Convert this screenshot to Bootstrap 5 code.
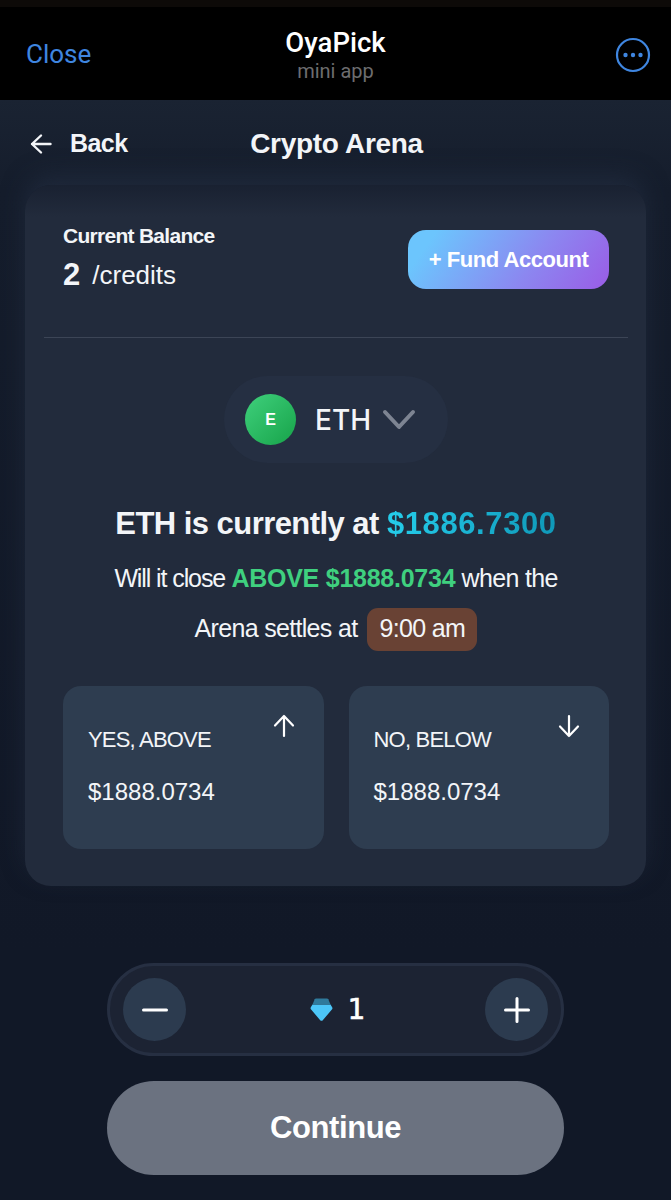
<!DOCTYPE html>
<html lang="en">
<head>
  <meta charset="UTF-8">
  <meta name="viewport" content="width=device-width, initial-scale=1.0">
  <title>OyaPick</title>
  <link href="https://cdn.jsdelivr.net/npm/bootstrap@5.3.0/dist/css/bootstrap.min.css" rel="stylesheet">
  <style>
  body {
    background: #111827;
    color: #f3f5f8;
    font-family: "Liberation Sans", Arial, sans-serif;
    width: 671px;
    height: 1200px;
    overflow: hidden;
  }
  .app-bar {
    height: 100px;
    background: #000;
    padding: 3px 20px 0 26px;
    border-top: 7px solid #0d0a08;
  }
  .app-side-l { width: 84px; }
  .app-side-r { width: 90px; }
  .app-close { font-size: 26px; color: #3f86e0; font-family: Roboto, sans-serif; margin-top: -2px; }
  .app-name { font-size: 27.5px; line-height: 30px; font-weight: 500; color: #fff; font-family: Roboto, sans-serif; margin-top: 1px; }
  .app-sub { font-size: 20px; line-height: 26px; color: #6d6d6f; font-family: Roboto, sans-serif; }
  .page-main {
    height: 1100px;
    background: linear-gradient(#1a2332 0, #151d2c 90px, #111827 850px);
    padding: 0 25px;
  }
  .sub-head { height: 85px; padding: 3px 0 0 2px; }
  .back-link { position: absolute; left: 5px; top: 3px; bottom: 0; font-size: 25px; font-weight: 700; letter-spacing: -.55px; gap: 18px; }
  .sub-title { font-size: 28px; font-weight: 700; letter-spacing: -.3px; margin: 0; line-height: 1; }
  .arena-card {
    height: 701px;
    background: linear-gradient(#192131 0, #222b3c 32px);
    border-radius: 26px;
    box-shadow: 0 -10px 24px -2px rgba(42, 54, 76, .5);
    padding: 0 37px 0 38px;
  }
  .balance-row { height: 152px; }
  .balance-info { padding-top: 39px; }
  .balance-label { font-size: 21px; font-weight: 700; letter-spacing: -.72px; line-height: 24px; }
  .balance-val { font-size: 26px; line-height: 34px; margin-top: 10px; gap: 12px; }
  .balance-val b { font-size: 31px; }
  .fund-btn {
    width: 201px;
    height: 59px;
    margin-top: 45px;
    border: 0;
    border-radius: 18px;
    color: #fff;
    font-size: 22px;
    font-weight: 700;
    letter-spacing: -.45px;
    background: linear-gradient(125deg, #6cc5fd 12%, #8c86f0 62%, #9a5ce6 100%);
  }
  .card-line { margin: 0 -19px; border: 0; border-top: 1px solid #3c4556; opacity: 1; }
  .coin-pill {
    width: 224px;
    height: 87px;
    margin: 38px auto 0;
    padding-left: 21px;
    background: #252f42;
    border-radius: 44px;
  }
  .coin-dot {
    width: 51px;
    height: 51px;
    border-radius: 50%;
    background: linear-gradient(135deg, #3fd07c, #17a349);
    color: #fff;
    font-size: 16px;
    font-weight: 700;
  }
  .coin-name { font-family: Inter, sans-serif; font-size: 28px; font-weight: 500; margin: 1px 11px 0 19px; }
  .price-head { font-size: 31px; font-weight: 700; letter-spacing: -.55px; line-height: 36px; margin: 43px 0 0; white-space: nowrap; }
  .price-now {
    letter-spacing: .6px;
    background: linear-gradient(90deg, #25cdeb, #0f98b8);
    -webkit-background-clip: text;
    background-clip: text;
    color: transparent;
  }
  .question { font-size: 25px; letter-spacing: -.68px; margin-top: 12px; }
  .question-line { height: 50px; }
  .close-tight { letter-spacing: -1.1px; }
  .up-green { color: #3fd07f; font-weight: 700; letter-spacing: -.25px; }
  .time-tag { background: #694234; border-radius: 11px; width: 110px; height: 43px; margin-left: 10px; }
  .pick-grid { margin-top: 32px; gap: 25px; }
  .pick-box {
    flex: 1;
    height: 163px;
    background: #2e3d50;
    border-radius: 18px;
    padding: 41px 25px 0;
    position: relative;
  }
  .pick-label { font-size: 22px; line-height: 26px; letter-spacing: -.8px; }
  .pick-price { font-size: 24px; line-height: 28px; margin-top: 25px; }
  .pick-arrow { position: absolute; top: 28px; right: 29px; }
  .step-box {
    width: 457px;
    height: 93px;
    margin: 77px auto 0;
    background: #1c2333;
    border: 3px solid #262f42;
    border-radius: 47px;
    padding: 0 13px;
  }
  .step-btn { width: 63px; height: 63px; border: 0; border-radius: 50%; background: #2c3b4f; padding: 0; }
  .step-num { font-family: "DejaVu Sans Mono", monospace; font-size: 29px; font-weight: 400; color: #fff; gap: 14px; margin-left: 4px; -webkit-text-stroke: .6px #fff; }
  .go-btn {
    display: block;
    width: 457px;
    height: 94px;
    margin: 25px auto 0;
    border: 0;
    border-radius: 47px;
    background: #6b7280;
    color: #fff;
    font-size: 31px;
    font-weight: 700;
    letter-spacing: -.4px;
  }
  </style>
</head>
<body>

<div class="app-bar d-flex align-items-center justify-content-between">
  <div class="app-side-l app-close">Close</div>
  <div class="text-center">
    <div class="app-name">OyaPick</div>
    <div class="app-sub">mini app</div>
  </div>
  <div class="app-side-r d-flex justify-content-end">
    <svg width="36" height="36" viewBox="0 0 36 36">
      <circle cx="18" cy="18" r="16" fill="none" stroke="#3f86e0" stroke-width="2.2"/>
      <circle cx="10.5" cy="18" r="2.2" fill="#3f86e0"/>
      <circle cx="18" cy="18" r="2.2" fill="#3f86e0"/>
      <circle cx="25.5" cy="18" r="2.2" fill="#3f86e0"/>
    </svg>
  </div>
</div>

<div class="page-main">
  <div class="sub-head position-relative d-flex align-items-center justify-content-center">
    <div class="back-link d-flex align-items-center">
      <svg width="22" height="22" viewBox="0 0 22 22" fill="none" stroke="#f3f5f8" stroke-width="2.4" stroke-linecap="round" stroke-linejoin="round">
        <path d="M20.500 11H2M11 2.500 2 11l9 8.500"/>
      </svg>
      <span>Back</span>
    </div>
    <h1 class="sub-title">Crypto Arena</h1>
  </div>

  <div class="arena-card">
    <div class="balance-row d-flex justify-content-between">
      <div class="balance-info">
        <div class="balance-label">Current Balance</div>
        <div class="balance-val d-flex align-items-center"><b>2</b><span>/credits</span></div>
      </div>
      <button class="fund-btn">+ Fund Account</button>
    </div>
    <hr class="card-line">

    <div class="coin-pill d-flex align-items-center">
      <div class="coin-dot d-flex align-items-center justify-content-center">E</div>
      <span class="coin-name">ETH</span>
      <svg width="34" height="21" viewBox="0 0 34 21" fill="none" stroke="#7d8492" stroke-width="4" stroke-linecap="round" stroke-linejoin="round">
        <path d="M3 3l14 15L31 3"/>
      </svg>
    </div>

    <p class="price-head text-center">ETH is currently at <span class="price-now">$1886.7300</span></p>
    <div class="question">
      <div class="question-line d-flex align-items-center justify-content-center text-nowrap"><span class="close-tight">Will it close</span>&nbsp;<span class="up-green">ABOVE $1888.0734</span>&nbsp;when the</div>
      <div class="question-line d-flex align-items-center justify-content-center text-nowrap">Arena settles at <span class="time-tag d-flex align-items-center justify-content-center">9:00 am</span></div>
    </div>

    <div class="pick-grid d-flex">
      <div class="pick-box">
        <svg class="pick-arrow" width="22" height="24" viewBox="0 0 22 24" fill="none" stroke="#fff" stroke-width="2.2" stroke-linecap="round" stroke-linejoin="round">
          <path d="M11 22V2M2 11.500 11 2l9 9.500"/>
        </svg>
        <div class="pick-label">YES, ABOVE</div>
        <div class="pick-price">$1888.0734</div>
      </div>
      <div class="pick-box">
        <svg class="pick-arrow" width="22" height="24" viewBox="0 0 22 24" fill="none" stroke="#fff" stroke-width="2.2" stroke-linecap="round" stroke-linejoin="round">
          <path d="M11 2v20M2 12.500 11 22l9-9.500"/>
        </svg>
        <div class="pick-label">NO, BELOW</div>
        <div class="pick-price">$1888.0734</div>
      </div>
    </div>
  </div>

  <div class="step-box d-flex align-items-center justify-content-between">
    <button class="step-btn d-flex align-items-center justify-content-center" aria-label="Less">
      <svg width="26" height="26" viewBox="0 0 26 26"><path d="M1.500 13h23" stroke="#fff" stroke-width="3" stroke-linecap="round"/></svg>
    </button>
    <div class="step-num d-flex align-items-center">
      <svg width="23" height="23" viewBox="0 0 23 23">
        <path d="M2.500 6.500h18l1.800 3q.4 1-.2 1.700L13 22a2 2 0 0 1-3 0L.9 11.200q-.6-.7-.2-1.700z" fill="#4cc6f8"/>
        <path d="M6 .5h11a1.500 1.500 0 0 1 1.300.8l2.200 5.200h-18l2.200-5.200A1.500 1.500 0 0 1 6 .5z" fill="#2f7a9c"/>
      </svg>
      <span>1</span>
    </div>
    <button class="step-btn d-flex align-items-center justify-content-center" aria-label="More">
      <svg width="26" height="26" viewBox="0 0 26 26"><path d="M1.500 13h23M13 1.500v23" stroke="#fff" stroke-width="3" stroke-linecap="round"/></svg>
    </button>
  </div>
  <button class="go-btn">Continue</button>
</div>

<script src="https://cdn.jsdelivr.net/npm/bootstrap@5.3.0/dist/js/bootstrap.bundle.min.js"></script>
</body>
</html>
